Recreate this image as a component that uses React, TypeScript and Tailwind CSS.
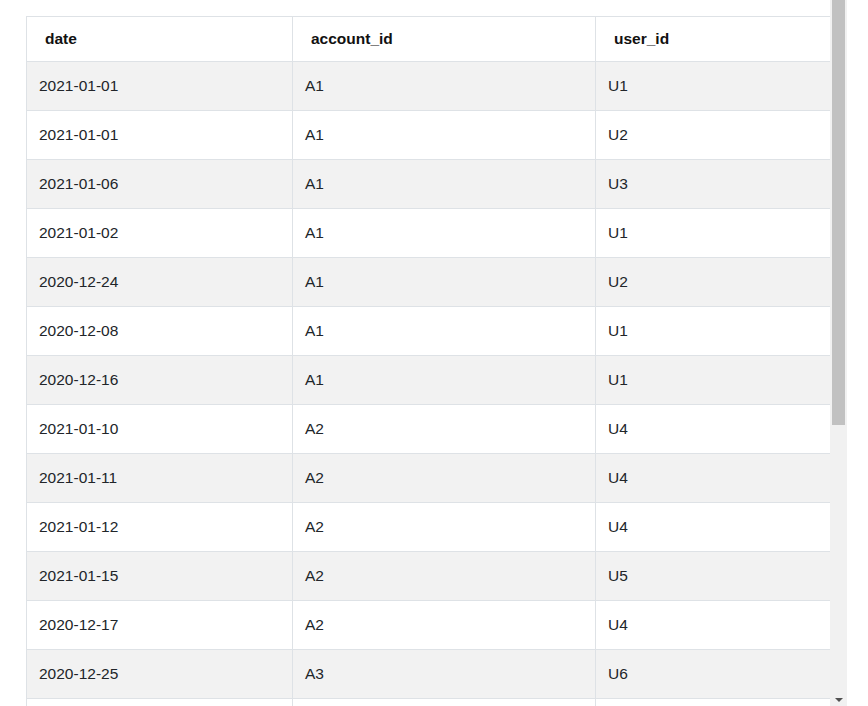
const rows: [string, string, string][] = [
  ["2021-01-01", "A1", "U1"],
  ["2021-01-01", "A1", "U2"],
  ["2021-01-06", "A1", "U3"],
  ["2021-01-02", "A1", "U1"],
  ["2020-12-24", "A1", "U2"],
  ["2020-12-08", "A1", "U1"],
  ["2020-12-16", "A1", "U1"],
  ["2021-01-10", "A2", "U4"],
  ["2021-01-11", "A2", "U4"],
  ["2021-01-12", "A2", "U4"],
  ["2021-01-15", "A2", "U5"],
  ["2020-12-17", "A2", "U4"],
  ["2020-12-25", "A3", "U6"],
  ["2020-12-15", "A3", "U6"],
];

export default function App() {
  return (
    <div className="w-[868px] h-[706px] flex bg-white overflow-hidden" style={{ fontFamily: '"Liberation Sans", Arial, sans-serif' }}>
      <div className="w-[830px] h-[706px] overflow-hidden pl-[26px] pt-[16px]">
        <table className="w-[804px] border-collapse table-fixed text-[15.5px] text-[#212529]">
          <colgroup>
            <col className="w-[266px]" />
            <col className="w-[303px]" />
            <col className="w-[235px]" />
          </colgroup>
          <thead>
            <tr className="h-[45px] border-b border-b-black">
              {["date", "account_id", "user_id"].map((h) => (
                <th key={h} className="text-left font-bold px-[18px] border-x border-t border-x-[#dee2e6] border-t-[#dee2e6] text-[#111]">{h}</th>
              ))}
            </tr>
          </thead>
          <tbody>
            {rows.map((r, i) => (
              <tr key={i} className={`h-[49px] ${i % 2 === 0 ? "bg-[#f2f2f2]" : "bg-white"}`}>
                {r.map((c, j) => (
                  <td key={j} className="px-3 border border-[#dee2e6]">{c}</td>
                ))}
              </tr>
            ))}
          </tbody>
        </table>
      </div>
      <div className="w-[17px] h-[706px] bg-[#f1f1f1] flex flex-col items-center">
        <div className="w-[13px] h-[425px] bg-[#c1c1c1]" />
        <div className="flex-1" />
        <div className="h-[12px] flex items-center justify-center">
          <div className="w-0 h-0 border-l-[4px] border-r-[4px] border-t-[4px] border-l-transparent border-r-transparent border-t-[#505050]" />
        </div>
      </div>
    </div>
  );
}
